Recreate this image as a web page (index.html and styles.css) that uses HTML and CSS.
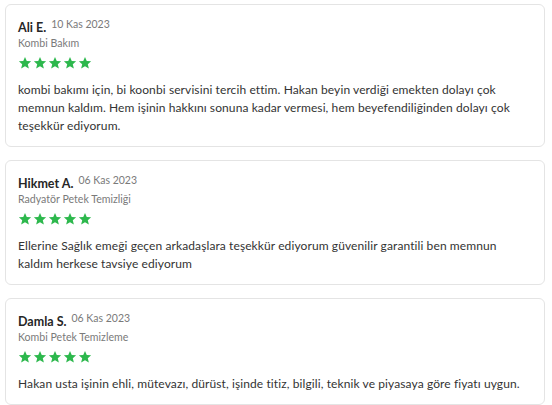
FILE: index.html
```html
<!DOCTYPE html>
<html lang="tr">
<head>
<meta charset="utf-8">
<link rel="stylesheet" href="styles.css">
</head>
<body>
<div class="list">
  <div class="card">
    <div class="head"><span class="name">Ali E.</span><span class="date">10 Kas 2023</span></div>
    <div class="service">Kombi Bakım</div>
    <div class="stars"><svg viewBox="0 0 24 24"><path d="M12 1.5l3 7 7.5.6-5.7 4.9 1.8 7.4L12 17.5l-6.6 3.9 1.8-7.4L1.5 9.1 9 8.5z"/></svg><svg viewBox="0 0 24 24"><path d="M12 1.5l3 7 7.5.6-5.7 4.9 1.8 7.4L12 17.5l-6.6 3.9 1.8-7.4L1.5 9.1 9 8.5z"/></svg><svg viewBox="0 0 24 24"><path d="M12 1.5l3 7 7.5.6-5.7 4.9 1.8 7.4L12 17.5l-6.6 3.9 1.8-7.4L1.5 9.1 9 8.5z"/></svg><svg viewBox="0 0 24 24"><path d="M12 1.5l3 7 7.5.6-5.7 4.9 1.8 7.4L12 17.5l-6.6 3.9 1.8-7.4L1.5 9.1 9 8.5z"/></svg><svg viewBox="0 0 24 24"><path d="M12 1.5l3 7 7.5.6-5.7 4.9 1.8 7.4L12 17.5l-6.6 3.9 1.8-7.4L1.5 9.1 9 8.5z"/></svg></div>
    <p class="text">kombi bakımı için, bi koonbi servisini tercih ettim. Hakan beyin verdiği emekten dolayı çok memnun kaldım. Hem işinin hakkını sonuna kadar vermesi, hem beyefendiliğinden dolayı çok teşekkür ediyorum.</p>
  </div>
  <div class="card">
    <div class="head"><span class="name">Hikmet A.</span><span class="date">06 Kas 2023</span></div>
    <div class="service">Radyatör Petek Temizliği</div>
    <div class="stars"><svg viewBox="0 0 24 24"><path d="M12 1.5l3 7 7.5.6-5.7 4.9 1.8 7.4L12 17.5l-6.6 3.9 1.8-7.4L1.5 9.1 9 8.5z"/></svg><svg viewBox="0 0 24 24"><path d="M12 1.5l3 7 7.5.6-5.7 4.9 1.8 7.4L12 17.5l-6.6 3.9 1.8-7.4L1.5 9.1 9 8.5z"/></svg><svg viewBox="0 0 24 24"><path d="M12 1.5l3 7 7.5.6-5.7 4.9 1.8 7.4L12 17.5l-6.6 3.9 1.8-7.4L1.5 9.1 9 8.5z"/></svg><svg viewBox="0 0 24 24"><path d="M12 1.5l3 7 7.5.6-5.7 4.9 1.8 7.4L12 17.5l-6.6 3.9 1.8-7.4L1.5 9.1 9 8.5z"/></svg><svg viewBox="0 0 24 24"><path d="M12 1.5l3 7 7.5.6-5.7 4.9 1.8 7.4L12 17.5l-6.6 3.9 1.8-7.4L1.5 9.1 9 8.5z"/></svg></div>
    <p class="text">Ellerine Sağlık emeği geçen arkadaşlara teşekkür ediyorum güvenilir garantili ben memnun kaldım herkese tavsiye ediyorum</p>
  </div>
  <div class="card">
    <div class="head"><span class="name">Damla S.</span><span class="date">06 Kas 2023</span></div>
    <div class="service">Kombi Petek Temizleme</div>
    <div class="stars"><svg viewBox="0 0 24 24"><path d="M12 1.5l3 7 7.5.6-5.7 4.9 1.8 7.4L12 17.5l-6.6 3.9 1.8-7.4L1.5 9.1 9 8.5z"/></svg><svg viewBox="0 0 24 24"><path d="M12 1.5l3 7 7.5.6-5.7 4.9 1.8 7.4L12 17.5l-6.6 3.9 1.8-7.4L1.5 9.1 9 8.5z"/></svg><svg viewBox="0 0 24 24"><path d="M12 1.5l3 7 7.5.6-5.7 4.9 1.8 7.4L12 17.5l-6.6 3.9 1.8-7.4L1.5 9.1 9 8.5z"/></svg><svg viewBox="0 0 24 24"><path d="M12 1.5l3 7 7.5.6-5.7 4.9 1.8 7.4L12 17.5l-6.6 3.9 1.8-7.4L1.5 9.1 9 8.5z"/></svg><svg viewBox="0 0 24 24"><path d="M12 1.5l3 7 7.5.6-5.7 4.9 1.8 7.4L12 17.5l-6.6 3.9 1.8-7.4L1.5 9.1 9 8.5z"/></svg></div>
    <p class="text">Hakan usta işinin ehli, mütevazı, dürüst, işinde titiz, bilgili, teknik ve piyasaya göre fiyatı uygun.</p>
  </div>
</div>
</body>
</html>
```
FILE: styles.css
```css
html, body {
  margin: 0;
  padding: 0;
  background: #ffffff;
  overflow: hidden;
}
body {
  font-family: Lato, "Liberation Sans", sans-serif;
  color: #333333;
}
.list {
  padding: 4px 7px 0 5px;
  display: flex;
  flex-direction: column;
  gap: 13px;
}
.card {
  border: 1px solid #e4e4e4;
  border-radius: 6px;
  padding: 13px 12px 11px 12px;
}
.head {
  display: flex;
  align-items: flex-start;
  gap: 5px;
  height: 17px;
}
.name {
  font-size: 12.5px;
  font-weight: 700;
  color: #262626;
  line-height: 17px;
  padding-top: 1px;
}
.date {
  font-size: 10.5px;
  color: #7a7a7a;
  line-height: 13px;
}
.service {
  font-size: 10.6px;
  color: #7a7a7a;
  line-height: 14px;
  margin-top: 1px;
}
.stars {
  display: flex;
  gap: 1px;
  margin-top: 6px;
  height: 15px;
}
.stars svg {
  width: 14px;
  height: 14px;
  fill: #2db84d;
}
.text {
  margin: 10px 0 0 0;
  font-size: 12px;
  letter-spacing: 0.1px;
  line-height: 18px;
  color: #333333;
}
```
